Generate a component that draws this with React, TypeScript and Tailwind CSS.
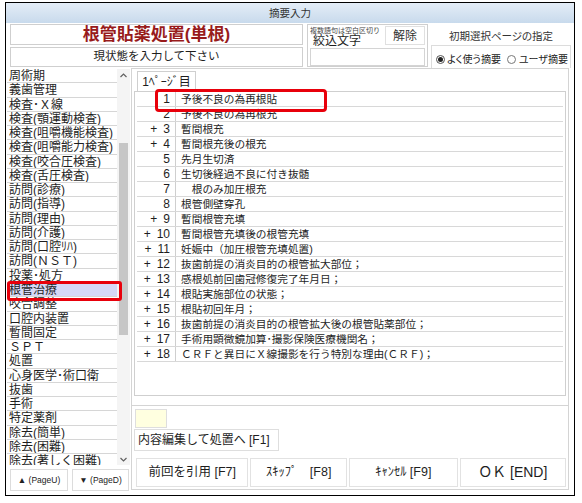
import React from "react";

const categories = [
  "周術期",
  "義歯管理",
  "検査･Ｘ線",
  "検査(顎運動検査)",
  "検査(咀嚼機能検査)",
  "検査(咀嚼能力検査)",
  "検査(咬合圧検査)",
  "検査(舌圧検査)",
  "訪問(診療)",
  "訪問(指導)",
  "訪問(理由)",
  "訪問(介護)",
  "訪問(口腔ﾘﾊ)",
  "訪問(ＮＳＴ)",
  "投薬･処方",
  "根管治療",
  "咬合調整",
  "口腔内装置",
  "暫間固定",
  "ＳＰＴ",
  "処置",
  "心身医学･術口衛",
  "抜歯",
  "手術",
  "特定薬剤",
  "除去(簡単)",
  "除去(困難)",
  "除去(著しく困難)",
];

const items: [boolean, number, string][] = [
  [false, 1, "予後不良の為再根貼"],
  [false, 2, "予後不良の為再根充"],
  [true, 3, "暫間根充"],
  [true, 4, "暫間根充後の根充"],
  [false, 5, "先月生切済"],
  [false, 6, "生切後経過不良に付き抜髄"],
  [false, 7, "　根のみ加圧根充"],
  [false, 8, "根管側壁穿孔"],
  [true, 9, "暫間根管充填"],
  [true, 10, "暫間根管充填後の根管充填"],
  [true, 11, "妊娠中（加圧根管充填処置)"],
  [true, 12, "抜歯前提の消炎目的の根管拡大部位；"],
  [true, 13, "感根処前回歯冠修復完了年月日；"],
  [true, 14, "根貼実施部位の状態；"],
  [true, 15, "根貼初回年月；"],
  [true, 16, "抜歯前提の消炎目的の根管拡大後の根管貼薬部位；"],
  [true, 17, "手術用顕微鏡加算･撮影保険医療機関名；"],
  [true, 18, "ＣＲＦと異日にＸ線撮影を行う特別な理由(ＣＲＦ)；"],
];

const font = "font-['Liberation_Sans','Noto_Sans_CJK_JP',sans-serif]";

function Chevron({ down = false }: { down?: boolean }) {
  return (
    <svg width="7" height="5" viewBox="0 0 7 5" className="text-[#606060]">
      <path
        d={down ? "M0.5 1 L3.5 4 L6.5 1" : "M0.5 4 L3.5 1 L6.5 4"}
        fill="none"
        stroke="currentColor"
        strokeWidth="1.2"
      />
    </svg>
  );
}

export default function App() {
  return (
    <div className={`relative h-[503px] w-[582px] bg-white text-[#1e1e1e] ${font}`}>
      <div className="ml-[5px] mt-[2px] flex h-[494px] w-[570px] flex-col border border-black bg-white">
        {/* title bar */}
        <div className="h-[20px] bg-gradient-to-b from-[#e4edf7] to-[#c8daec] text-center text-[10.5px] leading-[20px] text-[#333]">
          摘要入力
        </div>

        {/* header */}
        <div className="flex h-[45px] pl-[4px] pt-[1px]">
          <div className="flex w-[293px] flex-col gap-[2px]">
            <div className="flex h-[21px] items-center justify-center border border-[#cfcfcf] text-[17px] font-bold text-[#981b1b]">
              根管貼薬処置(単根)
            </div>
            <div className="flex h-[20px] items-center justify-center border border-[#cfcfcf] text-[11.5px]">
              現状態を入力して下さい
            </div>
          </div>

          <div className="ml-[4px] flex h-[43px] w-[121px] flex-col border border-[#cfcfcf] px-[2px] pt-[1px]">
            <div className="flex h-[21px]">
              <div className="flex flex-1 flex-col">
                <span className="text-[7px] leading-[9px] text-[#444]">複数語句は空白区切り</span>
                <span className="pl-[3px] text-[12px] leading-[12px]">絞込文字</span>
              </div>
              <div className="flex h-[19px] w-[40px] items-center justify-center border border-[#e0e0e0] text-[12px] text-[#333]">
                解除
              </div>
            </div>
            <div className="mt-[1px] h-[18px] border border-[#d4d4d4]" />
          </div>

          <div className="ml-[3px] flex w-[140px] flex-col [font-feature-settings:'palt']">
            <div className="pt-[6px] text-center text-[10.5px] leading-[12px] text-[#333]">
              初期選択ページの指定
            </div>
            <div className="mt-[3px] flex h-[26px] items-end whitespace-nowrap border border-b-0 border-[#dcdcdc] pb-[1px] pl-[4px] text-[10px] text-[#222]">
              <span className="flex items-center gap-[2px]">
                <span className="flex h-[9px] w-[9px] items-center justify-center rounded-full border border-[#555]">
                  <span className="h-[5px] w-[5px] rounded-full bg-[#222]" />
                </span>
                よく使う摘要
              </span>
              <span className="ml-[6px] flex items-center gap-[3px]">
                <span className="h-[9px] w-[9px] rounded-full border border-[#777]" />
                ユーザ摘要
              </span>
            </div>
          </div>
        </div>

        {/* main */}
        <div className="flex flex-1">
          {/* left list */}
          <div className="relative flex w-[125px] flex-col pl-[1px] pt-[1px]">
            <div className="flex h-[396px]">
              <div className="h-full w-[110px] overflow-hidden">
                {categories.map((c) => (
                  <div
                    key={c}
                    className={`h-[14.27px] truncate border-b border-[#d6d6d6] pl-[2px] pt-[1px] text-[12px] leading-[13px] ${
                      c === "根管治療" ? "bg-[#d6d8f6]" : ""
                    }`}
                  >
                    {c}
                  </div>
                ))}
              </div>
              <div className="flex w-[13px] flex-col items-center bg-[#f4f4f4]">
                <div className="flex h-[12px] items-center">
                  <Chevron />
                </div>
                <div className="mt-[62px] h-[192px] w-[9px] bg-[#c6c6c6]" />
                <div className="flex-1" />
                <div className="flex h-[12px] items-center">
                  <Chevron down />
                </div>
              </div>
            </div>
            <div className="mt-[4px] flex gap-[4px] pl-[3px] text-[8.5px] text-[#222]">
              <div className="flex h-[22px] w-[58px] items-center justify-center border border-[#dcdcdc]">
                ▲ (PageU)
              </div>
              <div className="flex h-[22px] w-[57px] items-center justify-center border border-[#dcdcdc]">
                ▼ (PageD)
              </div>
            </div>
            <div className="absolute left-[1px] top-[213px] h-[20px] w-[115px] rounded-[3px] border-[3px] border-[#e8000b]" />
          </div>

          {/* right panel */}
          <div className="mb-[5px] flex w-[438px] flex-col border border-[#d4d4d4] px-[2px] pt-[2px]">
            <div className="ml-[3px] flex h-[20px] w-[59px] items-center justify-center border border-b-0 border-[#cfcfcf] text-[12px]">
              1ﾍﾟｰｼﾞ目
            </div>
            <div className="relative h-[305px] border border-[#cfcfcf] px-[2px]">
              {items.map(([plus, n, t]) => (
                <div key={n} className="flex h-[15px] border-b border-[#d8d8d8] text-[10.7px] leading-[14px]">
                  <div className="flex w-[39px] justify-end gap-[6px] border-r border-[#cfcfcf] pr-[5px] text-[12px]">
                    {plus && <span>+</span>}
                    <span>{n}</span>
                  </div>
                  <div className="whitespace-pre pl-[5px]">{t}</div>
                </div>
              ))}
              <div className="absolute left-[20px] top-[-3px] h-[23px] w-[172px] rounded-[4px] border-[3px] border-[#e8000b]" />
            </div>
            <div className="mx-[-2px] mt-[9px] border-t border-[#d4d4d4]" />
            <div className="ml-[1px] mt-[3px] h-[19px] w-[32px] border border-[#dedede] bg-[#ffffe0]" />
            <div className="mt-[1px] flex h-[22px] w-[145px] items-center border border-[#dedede] pl-[3px] text-[12px]">
              内容編集して処置へ [F1]
            </div>
            <div className="mt-[7px] flex gap-[2px] pl-[2px] text-[12.5px]">
              <div className="flex h-[29px] w-[113px] items-center justify-center border border-[#e2e2e2]">
                前回を引用 [F7]
              </div>
              <div className="flex h-[29px] w-[97px] items-center justify-center border border-[#e2e2e2]">
                ｽｷｯﾌﾟ　[F8]
              </div>
              <div className="flex h-[29px] w-[109px] items-center justify-center border border-[#e2e2e2]">
                ｷｬﾝｾﾙ [F9]
              </div>
              <div className="flex h-[29px] w-[107px] items-center justify-center border border-[#e2e2e2] text-[14px]">
                ＯＫ [END]
              </div>
            </div>
          </div>
        </div>
      </div>
    </div>
  );
}
